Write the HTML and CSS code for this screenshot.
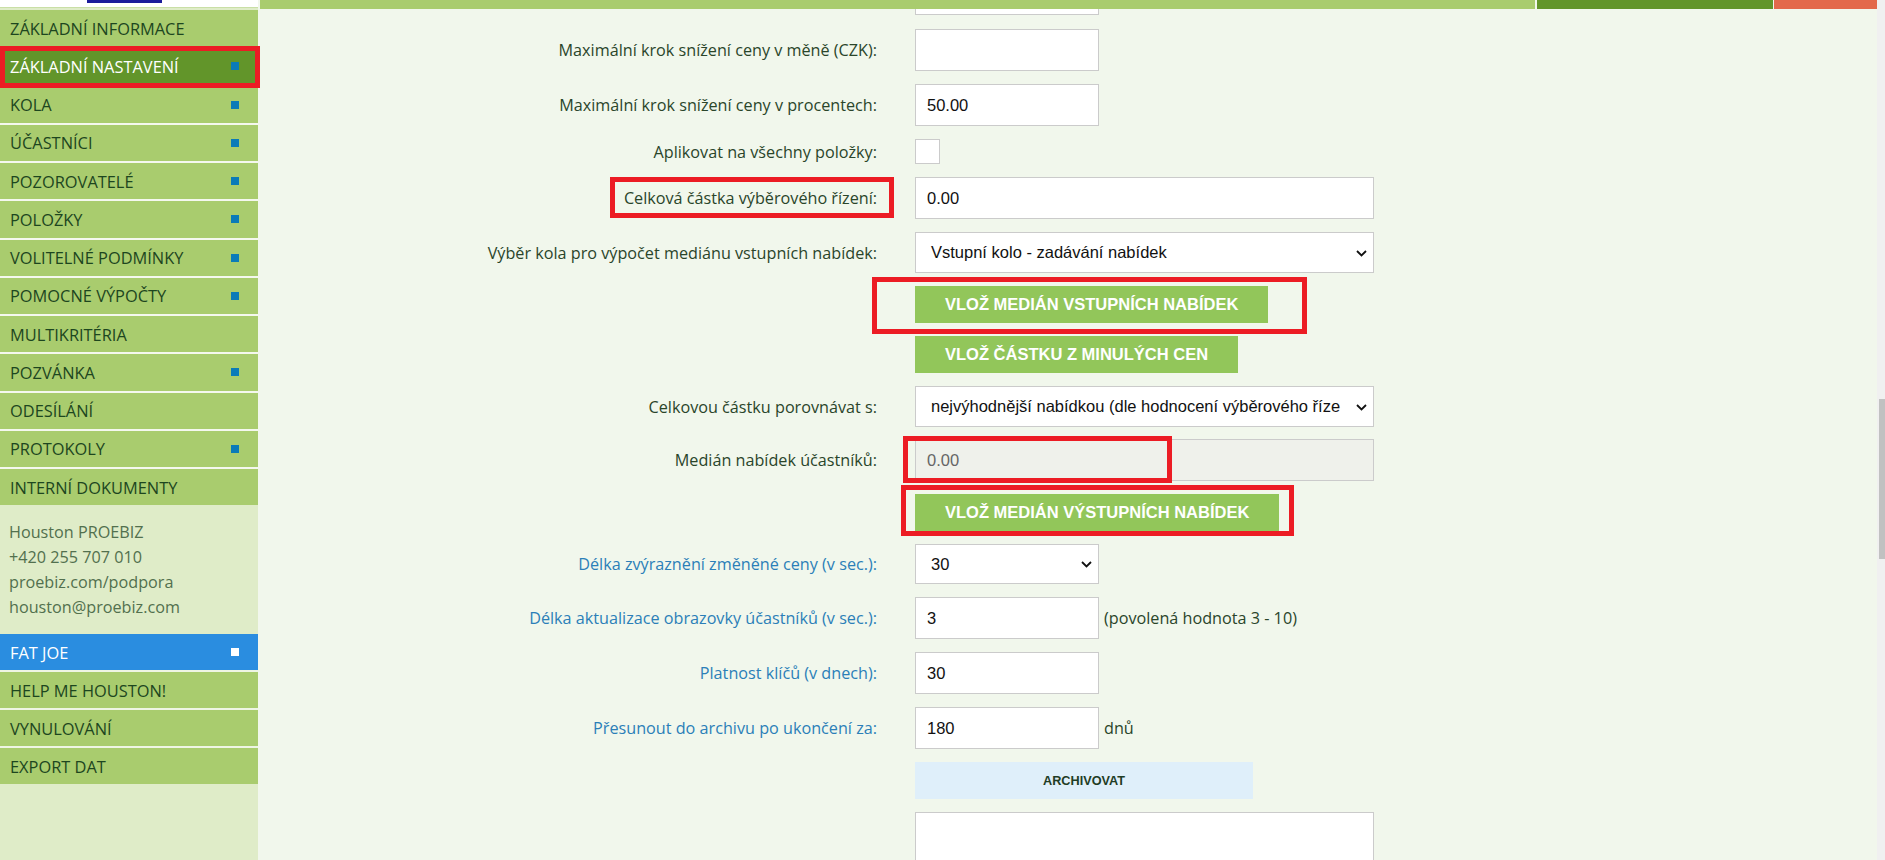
FILE: index.html
```html
<!DOCTYPE html>
<html lang="cs">
<head>
<meta charset="utf-8">
<title>Základní nastavení</title>
<link rel="stylesheet" href="styles.css">
</head>
<body>
<div class="app">
  <aside class="sidebar">
    <div class="logo"><span class="logo-mark"></span></div>
    <nav class="menu">
      <a class="item">ZÁKLADNÍ INFORMACE</a>
      <a class="item active hl-side">ZÁKLADNÍ NASTAVENÍ<span class="dot"></span></a>
      <a class="item">KOLA<span class="dot"></span></a>
      <a class="item">ÚČASTNÍCI<span class="dot"></span></a>
      <a class="item">POZOROVATELÉ<span class="dot"></span></a>
      <a class="item">POLOŽKY<span class="dot"></span></a>
      <a class="item">VOLITELNÉ PODMÍNKY<span class="dot"></span></a>
      <a class="item">POMOCNÉ VÝPOČTY<span class="dot"></span></a>
      <a class="item">MULTIKRITÉRIA</a>
      <a class="item">POZVÁNKA<span class="dot"></span></a>
      <a class="item">ODESÍLÁNÍ</a>
      <a class="item">PROTOKOLY<span class="dot"></span></a>
      <a class="item">INTERNÍ DOKUMENTY</a>
    </nav>
    <div class="contact">
      <div>Houston PROEBIZ</div>
      <div>+420 255 707 010</div>
      <div>proebiz.com/podpora</div>
      <div>houston@proebiz.com</div>
    </div>
    <nav class="menu menu-bottom">
      <a class="item user">FAT JOE<span class="dot white"></span></a>
      <a class="item">HELP ME HOUSTON!</a>
      <a class="item">VYNULOVÁNÍ</a>
      <a class="item">EXPORT DAT</a>
    </nav>
  </aside>

  <main class="main">
    <div class="topbar">
      <span class="tb tb-light"></span>
      <span class="tb tb-dark"></span>
      <span class="tb tb-red"></span>
    </div>
    <div class="viewport">
      <form class="form">
        <div class="row row-first"><label class="lbl"></label><div class="field"><input class="inp narrow" type="text"></div></div>
        <div class="row"><label class="lbl">Maximální krok snížení ceny v měně (CZK):</label><div class="field"><input class="inp narrow" type="text"></div></div>
        <div class="row"><label class="lbl">Maximální krok snížení ceny v procentech:</label><div class="field"><input class="inp narrow" type="text" value="50.00"></div></div>
        <div class="row row-check"><label class="lbl">Aplikovat na všechny položky:</label><div class="field"><span class="check"></span></div></div>
        <div class="row"><label class="lbl"><span class="hl hl-label">Celková částka výběrového řízení:</span></label><div class="field"><input class="inp wide" type="text" value="0.00"></div></div>
        <div class="row"><label class="lbl">Výběr kola pro výpočet mediánu vstupních nabídek:</label><div class="field"><div class="select wide"><span class="sel-text">Vstupní kolo - zadávání nabídek</span><svg class="chev" width="11" height="7" viewBox="0 0 11 7"><polyline points="1,1 5.5,5.5 10,1" fill="none" stroke="#111" stroke-width="1.8"/></svg></div></div></div>
        <div class="row row-btn"><span></span><div class="field"><button type="button" class="btn hl hl-btn1">VLOŽ MEDIÁN VSTUPNÍCH NABÍDEK</button></div></div>
        <div class="row row-btn"><span></span><div class="field"><button type="button" class="btn">VLOŽ ČÁSTKU Z MINULÝCH CEN</button></div></div>
        <div class="row"><label class="lbl">Celkovou částku porovnávat s:</label><div class="field"><div class="select wide"><span class="sel-text">nejvýhodnější nabídkou (dle hodnocení výběrového říze</span><svg class="chev" width="11" height="7" viewBox="0 0 11 7"><polyline points="1,1 5.5,5.5 10,1" fill="none" stroke="#111" stroke-width="1.8"/></svg></div></div></div>
        <div class="row row-tight"><label class="lbl">Medián nabídek účastníků:</label><div class="field"><div class="hl hl-median"><input class="inp wide disabled" type="text" value="0.00" disabled></div></div></div>
        <div class="row row-btn"><span></span><div class="field"><button type="button" class="btn hl hl-btn3">VLOŽ MEDIÁN VÝSTUPNÍCH NABÍDEK</button></div></div>
        <div class="row"><label class="lbl blue">Délka zvýraznění změněné ceny (v sec.):</label><div class="field"><div class="select narrow"><span class="sel-text">30</span><svg class="chev" width="11" height="7" viewBox="0 0 11 7"><polyline points="1,1 5.5,5.5 10,1" fill="none" stroke="#111" stroke-width="1.8"/></svg></div></div></div>
        <div class="row"><label class="lbl blue">Délka aktualizace obrazovky účastníků (v sec.):</label><div class="field"><input class="inp narrow" type="text" value="3"><span class="note">(povolená hodnota 3 - 10)</span></div></div>
        <div class="row"><label class="lbl blue">Platnost klíčů (v dnech):</label><div class="field"><input class="inp narrow" type="text" value="30"></div></div>
        <div class="row"><label class="lbl blue">Přesunout do archivu po ukončení za:</label><div class="field"><input class="inp narrow" type="text" value="180"><span class="note">dnů</span></div></div>
        <div class="row row-btn"><span></span><div class="field"><button type="button" class="btn-archive">ARCHIVOVAT</button></div></div>
        <div class="row row-area"><span></span><div class="field"><textarea class="area"></textarea></div></div>
      </form>
    </div>
  </main>

  <div class="scrollbar"><div class="thumb"></div></div>
</div>
</body>
</html>
```

FILE: styles.css
```css
*, *::before, *::after { box-sizing: border-box; margin: 0; padding: 0; }
html, body { height: 100%; }
body {
  font-family: "Open Sans", "Liberation Sans", sans-serif;
  background: #f1f7ec;
  overflow: hidden;
}
.app { display: flex; height: 860px; }

/* ---------- sidebar ---------- */
.sidebar {
  width: 258px;
  flex: none;
  background: #dfecc8;
  display: flex;
  flex-direction: column;
}
.logo {
  height: 8px;
  background: #fff;
  padding-left: 87px;
  border-bottom: 1px solid #c9dfa6;
  margin-bottom: 2px;
}
.logo-mark {
  display: block;
  width: 75px;
  height: 3px;
  background: #1b1b9a;
}
.menu {
  display: flex;
  flex-direction: column;
  gap: 2px;
  background: #f4f8ee;
}
.item {
  height: 36.25px;
  background: #a9cc6e;
  color: #1d461f;
  font-size: 16.4px;
  display: flex;
  align-items: center;
  justify-content: space-between;
  padding: 0 19px 0 10px;
  text-decoration: none;
  white-space: nowrap;
}
.item.active { background: #62952a; color: #fff; }
.item.user { background: #2a8de0; color: #fff; }
.dot {
  width: 8px;
  height: 8px;
  background: #0a7bb8;
  flex: none;
}
.dot.white { background: #fff; }
.hl-side { position: relative; }
.hl-side::after {
  content: "";
  position: absolute;
  left: 0;
  right: -2px;
  top: -2px;
  bottom: -3px;
  border: 5px solid #ec1c24;
}
.contact {
  padding: 15px 9px 14px;
  font-size: 16.2px;
  line-height: 25px;
  color: #52704e;
}
.menu-bottom { background: #eef5e4; }
.menu-bottom .item { height: 36px; }

/* ---------- main ---------- */
.main {
  flex: 1;
  display: flex;
  flex-direction: column;
  min-width: 0;
}
.topbar {
  height: 9px;
  display: flex;
  margin-left: 2px;
  flex: none;
  position: relative;
  z-index: 2;
}
.tb { display: block; height: 100%; }
.tb-light { flex: 1; background: #a9cc6e; }
.tb-dark { width: 236px; margin-left: 2px; background: #62952a; }
.tb-red { width: 103px; margin-left: 1px; background: #e3694b; }

.viewport { flex: 1; overflow: hidden; }
.form {
  display: flex;
  flex-direction: column;
  gap: 13px;
  margin-top: -36px;
}
.row {
  display: grid;
  grid-template-columns: 619px 1fr;
  column-gap: 38px;
  align-items: center;
}
.row-first { margin-bottom: 1px; }
.row-tight { margin-top: -1px; }
.lbl {
  text-align: right;
  font-size: 16.2px;
  line-height: 22px;
  color: #2a452a;
  white-space: nowrap;
}
.lbl.blue { color: #2b7fb8; }
.field { display: flex; align-items: center; }

.inp {
  height: 42px;
  border: 1px solid #cbcbcb;
  background: #fff;
  font-family: "Liberation Sans", Arial, sans-serif;
  font-size: 16.5px;
  color: #111;
  padding: 0 11px;
  outline: none;
}
.narrow { width: 184px; }
.wide { width: 459px; }
.inp.disabled { background: #eff1eb; color: #666; }

.check {
  display: block;
  width: 25px;
  height: 25px;
  background: #fff;
  border: 1px solid #cbcbcb;
}

.select {
  position: relative;
  height: 41px;
  border: 1px solid #cbcbcb;
  background: #fff;
  font-family: "Liberation Sans", Arial, sans-serif;
  font-size: 16.5px;
  color: #111;
  display: flex;
  align-items: center;
  padding: 0 24px 0 15px;
}
.select.narrow { height: 40px; }
.sel-text { white-space: nowrap; }
.chev { position: absolute; right: 6px; top: 50%; margin-top: -3px; }

.note {
  font-size: 16.2px;
  color: #2a452a;
  margin-left: 5px;
  white-space: nowrap;
}

.btn {
  height: 37px;
  padding: 0 30px;
  border: none;
  background: #92c65a;
  color: #fff;
  font-family: "Liberation Sans", Arial, sans-serif;
  font-weight: bold;
  font-size: 16.5px;
  white-space: nowrap;
}
.btn-archive {
  width: 338px;
  height: 37px;
  border: none;
  background: #dfeffa;
  color: #1f3d25;
  font-family: "Liberation Sans", Arial, sans-serif;
  font-weight: bold;
  font-size: 12.7px;
}
.area {
  width: 459px;
  height: 80px;
  border: 1px solid #cbcbcb;
  background: #fff;
  resize: none;
}

/* ---------- red highlight annotations ---------- */
.hl { position: relative; }
.hl::after {
  content: "";
  position: absolute;
  border: 5px solid #ec1c24;
  pointer-events: none;
}
.hl-label { display: inline-block; }
.hl-label::after { left: -14px; right: -17px; top: -10px; bottom: -9px; }
.hl-btn1::after { left: -43px; right: -39px; top: -9px; bottom: -11px; }
.hl-btn3::after { left: -14px; right: -15px; top: -9px; bottom: -5px; }
.hl-median::after { left: -12px; top: -3px; width: 269px; height: 47px; }

/* ---------- scrollbar ---------- */
.scrollbar {
  width: 8px;
  flex: none;
  background: #f0f0f0;
  padding-top: 399px;
}
.thumb {
  width: 6px;
  height: 160px;
  margin-left: 2px;
  background: #c1c1c1;
}
```
